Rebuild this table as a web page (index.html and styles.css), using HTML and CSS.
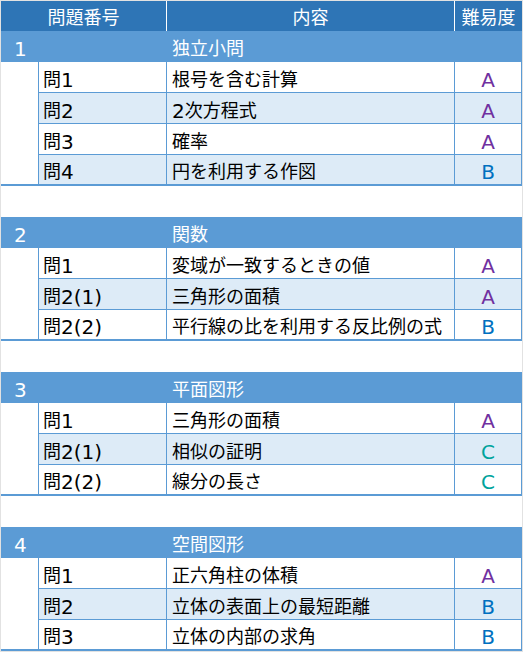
FILE: index.html
```html
<!DOCTYPE html>
<html lang="ja">
<head>
<meta charset="utf-8">
<title>問題一覧</title>
<link rel="stylesheet" href="styles.css">
</head>
<body>
<div class="sheet">
  <div class="head">
    <div class="h">問題番号</div>
    <div class="h sep">内容</div>
    <div class="h sep">難易度</div>
  </div>

  <section class="group">
    <div class="sec"><span class="sec-no">1</span><span class="sec-title">独立小問</span></div>
    <div class="row"><span class="blank"></span><span class="c q">問<span class="n">1</span></span><span class="c t">根号を含む計算</span><span class="c g a">A</span></div>
    <div class="row alt"><span class="blank"></span><span class="c q">問<span class="n">2</span></span><span class="c t"><span class="n">2</span>次方程式</span><span class="c g a">A</span></div>
    <div class="row"><span class="blank"></span><span class="c q">問<span class="n">3</span></span><span class="c t">確率</span><span class="c g a">A</span></div>
    <div class="row alt last"><span class="blank"></span><span class="c q">問<span class="n">4</span></span><span class="c t">円を利用する作図</span><span class="c g b">B</span></div>
  </section>

  <section class="group">
    <div class="sec"><span class="sec-no">2</span><span class="sec-title">関数</span></div>
    <div class="row"><span class="blank"></span><span class="c q">問<span class="n">1</span></span><span class="c t">変域が一致するときの値</span><span class="c g a">A</span></div>
    <div class="row alt"><span class="blank"></span><span class="c q">問<span class="n">2(1)</span></span><span class="c t">三角形の面積</span><span class="c g a">A</span></div>
    <div class="row last"><span class="blank"></span><span class="c q">問<span class="n">2(2)</span></span><span class="c t">平行線の比を利用する反比例の式</span><span class="c g b">B</span></div>
  </section>

  <section class="group">
    <div class="sec"><span class="sec-no">3</span><span class="sec-title">平面図形</span></div>
    <div class="row"><span class="blank"></span><span class="c q">問<span class="n">1</span></span><span class="c t">三角形の面積</span><span class="c g a">A</span></div>
    <div class="row alt"><span class="blank"></span><span class="c q">問<span class="n">2(1)</span></span><span class="c t">相似の証明</span><span class="c g cc">C</span></div>
    <div class="row last"><span class="blank"></span><span class="c q">問<span class="n">2(2)</span></span><span class="c t">線分の長さ</span><span class="c g cc">C</span></div>
  </section>

  <section class="group">
    <div class="sec"><span class="sec-no">4</span><span class="sec-title">空間図形</span></div>
    <div class="row"><span class="blank"></span><span class="c q">問<span class="n">1</span></span><span class="c t">正六角柱の体積</span><span class="c g a">A</span></div>
    <div class="row alt"><span class="blank"></span><span class="c q">問<span class="n">2</span></span><span class="c t">立体の表面上の最短距離</span><span class="c g b">B</span></div>
    <div class="row last"><span class="blank"></span><span class="c q">問<span class="n">3</span></span><span class="c t">立体の内部の求角</span><span class="c g b">B</span></div>
  </section>
</div>
</body>
</html>
```

FILE: styles.css
```css
* {
  box-sizing: border-box;
  margin: 0;
  padding: 0;
}

html,
body {
  background: #e2e2e2;
}

body {
  margin: 0;
  font-family: "DejaVu Sans", "Noto Sans CJK JP", sans-serif;
  font-size: 18px;
  color: #000;
}

.sheet {
  margin: 1px 0 0 1px;
  width: 521px;
  background: #fff;
}

.head {
  display: grid;
  grid-template-columns: 165px 288px 68px;
  height: 30px;
  background: #2e75b6;
  color: #fff;
}

.h {
  display: flex;
  align-items: center;
  justify-content: center;
  line-height: 1;
  padding-top: 3px;
}

.sep {
  border-left: 1px solid #fff;
}

.group {
  margin-bottom: 31px;
}

.group:last-child {
  margin-bottom: 0;
}

.sec {
  display: grid;
  grid-template-columns: 165px 356px;
  height: 31px;
  background: #5b9bd5;
  color: #fff;
  align-items: center;
  line-height: 1;
}

.sec-no {
  padding-left: 13px;
  padding-top: 5px;
  font-size: 20px;
}

.sec-title {
  padding-left: 6px;
  padding-top: 5px;
}

.row {
  display: grid;
  grid-template-columns: 37px 128px 288px 68px;
  height: 31px;
}

.row.last {
  border-bottom: 2px solid #5b9bd5;
}

.blank {
  background: #fff;
}

.c {
  display: flex;
  align-items: center;
  border-left: 1px solid #5b9bd5;
  border-bottom: 1px solid #5b9bd5;
  line-height: 1;
  padding-top: 5px;
  white-space: nowrap;
}

.n {
  font-size: 20px;
}

.row.last .c {
  border-bottom: none;
}

.row.alt .c {
  background: #ddebf7;
}

.q {
  padding-left: 4px;
}

.t {
  padding-left: 5px;
}

.g {
  justify-content: center;
  border-right: 1px solid #5b9bd5;
  font-size: 20px;
}

.a {
  color: #7030a0;
}

.b {
  color: #0070c0;
}

.cc {
  color: #00a39c;
}
```
